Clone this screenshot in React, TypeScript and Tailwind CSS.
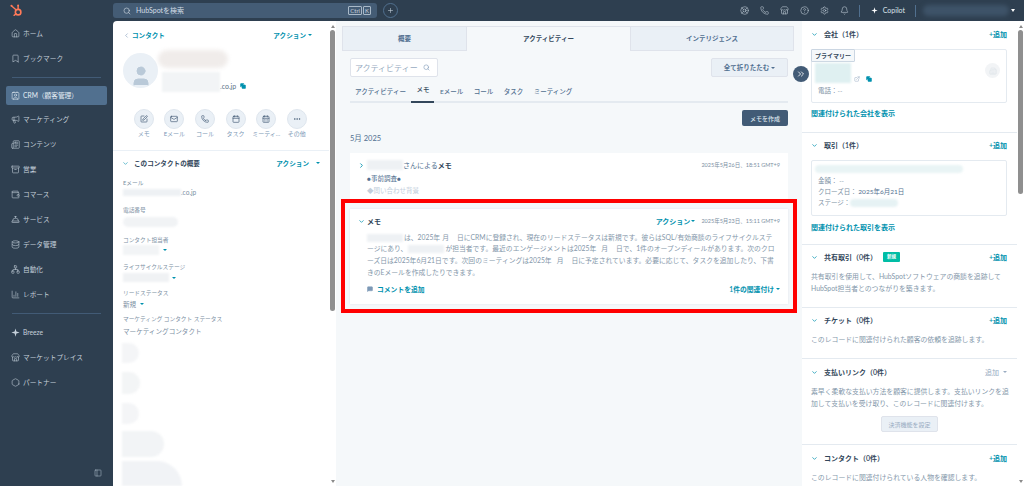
import { Archive, BarChart3, Bell, Bookmark, ChevronDown, ChevronLeft, ChevronRight, ChevronsRight, CircleHelp, ConciergeBell, Copy, Database, Ellipsis, ExternalLink, House, Mail, Megaphone, MessageSquare, Network, Newspaper, PanelLeft, Phone, Plus, Search, Settings, SquarePen, Store, Calendar, CalendarDays, Wallet, Contact, LifeBuoy, Hexagon, User, Building2 } from 'lucide-react';
import type { ReactNode } from 'react';

const navTop = [
  { label: 'マーケティング', icon: Megaphone },
  { label: 'コンテンツ', icon: Newspaper },
  { label: '営業', icon: Archive },
  { label: 'コマース', icon: Wallet },
  { label: 'サービス', icon: ConciergeBell },
  { label: 'データ管理', icon: Database },
  { label: '自動化', icon: Network },
  { label: 'レポート', icon: BarChart3 },
];

function Spark({ className }: { className?: string }) {
  return (
    <svg viewBox="0 0 12 12" className={className} fill="currentColor">
      <path d="M6 0.5 7.2 4.8 11.5 6 7.2 7.2 6 11.5 4.8 7.2 0.5 6 4.8 4.8Z" />
    </svg>
  );
}

function Logo() {
  return (
    <svg viewBox="0 0 16 16" className="h-[13px] w-[13px] text-[#ff7a59]" fill="none" stroke="currentColor">
      <circle cx="10" cy="10" r="3.4" strokeWidth="2" />
      <path d="M10 6.5V2.5M2 2.5l5.4 4.6M5 14l2.6-2" strokeWidth="1.7" strokeLinecap="round" />
      <circle cx="10" cy="1.8" r="1.2" fill="currentColor" stroke="none" />
      <circle cx="1.8" cy="2.2" r="1.3" fill="currentColor" stroke="none" />
    </svg>
  );
}

function NavItem({ label, icon: Icon }: { label: string; icon: typeof House }) {
  return (
    <div className="flex h-[25px] items-center gap-[3px] pl-[11px] text-[6.7px] text-[#c5d0db]">
      <Icon className="h-[9px] w-[9px] shrink-0" strokeWidth={1.5} />
      <span className="whitespace-nowrap">{label}</span>
    </div>
  );
}

function Sidebar() {
  return (
    <aside className="flex w-[113px] shrink-0 flex-col">
      <div className="flex h-[21px] items-center pl-[10px]"><Logo /></div>
      <NavItem label="ホーム" icon={House} />
      <NavItem label="ブックマーク" icon={Bookmark} />
      <div className="mx-[12px] mb-[8px] mt-[6px] h-px bg-[#425b76]" />
      <div className="mx-[6px] mb-[2px] flex h-[19px] items-center gap-[3px] rounded-[2px] bg-[#51708f] pl-[5px] text-[6.7px] text-[#e5edf4]">
        <Contact className="h-[9px] w-[9px]" strokeWidth={1.5} />
        <span>CRM（顧客管理）</span>
      </div>
      {navTop.map((n) => <NavItem key={n.label} label={n.label} icon={n.icon} />)}
      <div className="mx-[12px] mb-[6px] mt-[6px] h-px bg-[#425b76]" />
      <NavItem label="Breeze" icon={Spark as unknown as typeof House} />
      <NavItem label="マーケットプレイス" icon={Store} />
      <NavItem label="パートナー" icon={Hexagon} />
      <div className="mb-[9px] mr-[11px] mt-auto flex justify-end text-[#b6c4d2]">
        <PanelLeft className="h-[8px] w-[8px]" strokeWidth={1.5} />
      </div>
    </aside>
  );
}

function TopBar() {
  return (
    <header className="flex h-[21px] items-center text-[#c5d0db]">
      <div className="flex h-[15px] w-[264px] items-center rounded-[3px] bg-[#445c75] pl-[10px] pr-[4px] text-[7px]">
        <Search className="mr-[5px] h-[8px] w-[8px]" strokeWidth={2} />
        <span className="text-[#d3dde6]">HubSpotを検索</span>
        <span className="ml-auto flex gap-[1px] pr-[2px] text-[6px]">
          <span className="rounded-[1px] border border-[#a9b9c8] px-[1px] leading-[7px]">Ctrl</span>
          <span className="rounded-[1px] border border-[#a9b9c8] px-[1px] leading-[7px]">K</span>
        </span>
      </div>
      <div className="ml-[6px] flex h-[15px] w-[15px] items-center justify-center rounded-full border border-[#51708f]">
        <Plus className="h-[7px] w-[7px]" strokeWidth={2} />
      </div>
      <div className="ml-auto flex items-center gap-[11px]">
        <LifeBuoy className="h-[9px] w-[9px]" strokeWidth={1.5} />
        <Phone className="h-[9px] w-[9px]" strokeWidth={1.5} />
        <Store className="h-[9px] w-[9px]" strokeWidth={1.5} />
        <CircleHelp className="h-[9px] w-[9px]" strokeWidth={1.5} />
        <Settings className="h-[9px] w-[9px]" strokeWidth={1.5} />
        <Bell className="h-[9px] w-[9px]" strokeWidth={1.5} />
      </div>
      <div className="ml-[10px] h-[12px] w-px bg-[#51708f]" />
      <Spark className="ml-[11px] h-[7px] w-[7px] text-white" />
      <span className="ml-[5px] text-[7px] text-[#dbe3ea]">Copilot</span>
      <div className="ml-[10px] h-[12px] w-px bg-[#51708f]" />
      <div className="ml-[7px] h-[11px] w-[86px] rounded-full bg-[#3e5368] blur-[2px]" />
      <div className="ml-[2px] mr-[9px] h-0 w-0 border-x-[2.5px] border-t-[3px] border-x-transparent border-t-white" />
    </header>
  );
}

function Caret({ className = 'border-t-[#0091ae]' }: { className?: string }) {
  return <span className={`inline-block h-0 w-0 border-x-[2px] border-t-[2.5px] border-x-transparent ${className}`} />;
}

function ActionBtn({ label, icon }: { label: string; icon: ReactNode }) {
  return (
    <div className="flex w-[30.6px] flex-col items-center gap-[1px]">
      <div className="flex h-[20px] w-[20px] items-center justify-center rounded-full border border-[#dfe6ee] bg-[#eaf0f6] text-[#425b76]">{icon}</div>
      <span className="whitespace-nowrap text-[6px] leading-[8px] text-[#7c98b6]">{label}</span>
    </div>
  );
}

function Field({ label, children, className }: { label: string; children: ReactNode; className?: string }) {
  return (
    <div className={className}>
      <div className="text-[5.7px] leading-[9px] text-[#7c8fa3]">{label}</div>
      {children}
    </div>
  );
}

function LeftPanel() {
  const ic = 'h-[8px] w-[8px]';
  return (
    <section className="flex w-[223px] shrink-0 overflow-hidden rounded-tl-[4px] bg-white">
      <div className="w-[216px] shrink-0">
        <div className="flex items-center justify-between pl-[10px] pr-[17px] pt-[9px] text-[6.6px] font-semibold leading-[10px] text-[#0091ae]">
          <span className="flex items-center gap-[2px]"><ChevronLeft className="h-[7px] w-[7px] text-[#7c98b6]" />コンタクト</span>
          <span className="flex items-center gap-[2px]">アクション<Caret /></span>
        </div>
        <div className="flex pl-[10px] pt-[13px]">
          <div className="relative flex h-[35px] w-[35px] flex-col items-center overflow-hidden rounded-full bg-[#eaf0f6] pt-[11px]">
            <User className="h-[24px] w-[24px] fill-[#b9c9d8] text-[#b9c9d8]" strokeWidth={1} />
          </div>
          <div className="-mt-[3px]">
            <div className="h-[18px] w-[70px] rounded-full bg-[#f0ecea] blur-[2px]" />
            <div className="mt-[4px] flex items-end pl-[4px] text-[7px] text-[#5c7288]">
              <div className="h-[20px] w-[58px] bg-[#f2f4f6] blur-[1px]" />
              <span className="mb-[1px]">.co.jp</span>
              <Copy className="mb-[3px] ml-[4px] h-[6px] w-[6px] fill-[#0091ae] text-[#0091ae]" />
            </div>
          </div>
        </div>
        <div className="flex pl-[15.5px] pt-[17px]">
          <ActionBtn label="メモ" icon={<SquarePen className={ic} />} />
          <ActionBtn label="Eメール" icon={<Mail className={ic} />} />
          <ActionBtn label="コール" icon={<Phone className={ic} />} />
          <ActionBtn label="タスク" icon={<Calendar className={ic} />} />
          <ActionBtn label="ミーティ..." icon={<CalendarDays className={ic} />} />
          <ActionBtn label="その他" icon={<Ellipsis className={ic} />} />
        </div>
        <div className="mt-[12px] h-px bg-[#eaf0f6]" />
        <div className="flex items-center pl-[9px] pr-[9px] pt-[7px] text-[6.6px] font-semibold leading-[10px]">
          <ChevronDown className="h-[7px] w-[7px] text-[#0091ae]" />
          <span className="ml-[5px] text-[#33475b]">このコンタクトの概要</span>
          <span className="ml-auto flex items-center gap-[7px] text-[#0091ae]">アクション<Caret /></span>
        </div>
        <div className="pl-[10px] text-[6.6px] text-[#7c8fa3]">
          <Field label="Eメール" className="mt-[10px]">
            <div className="flex h-[10px] items-center leading-[10px]"><div className="h-[7px] w-[58px] bg-[#eef1f4] blur-[1px]" /><span>.co.jp</span></div>
          </Field>
          <Field label="電話番号" className="mt-[8px]">
            <div className="mt-[3px] h-[10px] w-[55px] rounded-full bg-[#f1f3f5] blur-[1px]" />
          </Field>
          <Field label="コンタクト担当者" className="mt-[8px]">
            <div className="mt-[1px] flex items-center gap-[4px]"><div className="h-[10px] w-[36px] bg-[#f2f4f6] blur-[1px]" /><Caret /></div>
          </Field>
          <Field label="ライフサイクルステージ" className="mt-[7px]">
            <div className="mt-[2px] flex items-center gap-[3px]"><div className="h-[9px] w-[46px] bg-[#f0f2f4] blur-[1px]" /><Caret /></div>
          </Field>
          <Field label="リードステータス" className="mt-[6px]">
            <div className="mt-[2px] flex h-[10px] items-center gap-[4px] leading-[10px]">新規<Caret /></div>
          </Field>
          <Field label="マーケティング コンタクト ステータス" className="mt-[5px]">
            <div className="mt-[3px] leading-[11px]">マーケティングコンタクト</div>
          </Field>
        </div>
        <div className="flex flex-col pl-[9px] pt-[6px]">
          <div className="h-[20px] w-[17px] rounded-r-full bg-[#f4f5f7] blur-[1px]" />
          <div className="mt-[9px] h-[22px] w-[18px] rounded-r-full bg-[#f3f5f6] blur-[1px]" />
          <div className="mt-[9px] h-[21px] w-[17px] rounded-r-full bg-[#f4f5f7] blur-[1px]" />
          <div className="mt-[7px] h-[26px] w-[42px] rounded-r-full bg-[#f2f4f6] blur-[1px]" />
          <div className="mt-[4px] h-[25px] w-[60px] rounded-tr-full bg-[#f1f3f6] blur-[1px]" />
        </div>
      </div>
      <Scrollbar thumb="h-[281px]" />
    </section>
  );
}

function Scrollbar({ thumb }: { thumb: string }) {
  return (
    <div className="flex w-[7px] shrink-0 flex-col items-center bg-white pt-[4px]">
      <div className="h-0 w-0 border-x-[2.5px] border-b-[3px] border-x-transparent border-b-[#8a8a8a]" />
      <div className={`mt-[2px] w-[5px] rounded-full bg-[#8f8f8f] ${thumb}`} />
      <div className="mb-[3px] mt-auto h-0 w-0 border-x-[2.5px] border-t-[3px] border-x-transparent border-t-[#8a8a8a]" />
    </div>
  );
}

function CenterPanel() {
  const subTabs = ['アクティビティー', 'メモ', 'Eメール', 'コール', 'タスク', 'ミーティング'];
  return (
    <section className="w-[466px] shrink-0 overflow-hidden bg-[#f5f8fa] pt-[5px] text-[#33475b]">
      <div className="ml-[6px] mr-[8px] flex h-[25px] text-[6.5px] font-semibold text-[#516f90]">
        <div className="flex w-[125px] items-center justify-center border border-[#dfe3eb] bg-[#eaf0f6]">概要</div>
        <div className="flex w-[163px] items-center justify-center border-t border-[#dfe3eb] bg-[#f5f8fa] text-[#33475b]">アクティビティー</div>
        <div className="flex flex-1 items-center justify-center border border-[#dfe3eb] bg-[#eaf0f6]">インテリジェンス</div>
      </div>
      <div className="mx-[14px]">
        <div className="mt-[7px] flex items-center justify-between">
          <div className="flex h-[19px] w-[88px] items-center justify-between overflow-hidden rounded-[2px] border border-[#dfe3eb] bg-white pl-[4px] pr-[7px] text-[8px] text-[#99acc2]">
            <span className="w-[64px] overflow-hidden whitespace-nowrap">アクティビティー</span>
            <Search className="h-[7px] w-[7px] text-[#7c98b6]" />
          </div>
          <div className="flex h-[19px] w-[77px] items-center justify-center gap-[2px] rounded-[2px] border border-[#dfe3eb] bg-[#eaf0f6] text-[6.5px] font-semibold text-[#516f90]">
            全て折りたたむ<Caret className="border-t-[#516f90]" />
          </div>
        </div>
        <div className="flex h-[26px] items-end gap-[10.5px] border-b-[2px] border-[#e4eaf0] pl-[5px] text-[6.5px] font-medium text-[#516f90]">
          {subTabs.map((t) => (
            <span key={t} className={t === 'メモ' ? 'relative -mx-[5px] -mb-[2px] border-b-[2px] border-[#33475b] px-[5px] pb-[7px] leading-[9px] text-[#33475b]' : 'pb-[5px] leading-[9px]'}>{t}</span>
          ))}
        </div>
        <div className="mt-[7px] flex justify-end">
          <div className="flex h-[16px] w-[46px] items-center justify-center rounded-[2px] bg-[#425b76] text-[6px] font-medium text-[#dfe6ee]">メモを作成</div>
        </div>
        <div className="mt-[8px] text-[7.5px] leading-[10px] text-[#516f90]">5月 2025</div>

        <div className="mt-[9px] h-[48px] bg-white px-[8px] pt-[7px]">
          <div className="flex items-center text-[7px] leading-[10px]">
            <ChevronRight className="h-[7px] w-[7px] text-[#0091ae]" strokeWidth={3} />
            <div className="ml-[2px] h-[10px] w-[36px] bg-[#eef1f4] blur-[1px]" />
            <span className="text-[#516f90]">さんによる</span><span className="font-semibold">メモ</span>
            <span className="ml-auto text-[5.5px] text-[#7c8fa3]">2025年5月26日、18:51 GMT+9</span>
          </div>
          <div className="mt-[4px] pl-[9px] text-[6.5px] leading-[9px] text-[#516f90]">●事前調査●</div>
          <div className="mt-[3px] pl-[9px] text-[6.5px] leading-[9px] text-[#c2cedb]">◆問い合わせ背景</div>
        </div>

        <div className="mt-[8px] h-[95px] bg-white px-[8px] pt-[7px] shadow-[0_0_2px_#dfe3eb]">
          <div className="flex items-center text-[7px] leading-[10px]">
            <ChevronDown className="h-[7px] w-[7px] text-[#0091ae]" strokeWidth={2.5} />
            <span className="ml-[2px] font-semibold">メモ</span>
            <span className="ml-auto flex items-center gap-[1px] font-semibold text-[#0091ae]">アクション<Caret /></span>
            <span className="ml-[6px] text-[5.5px] text-[#7c8fa3]">2025年5月23日、15:11 GMT+9</span>
          </div>
          <p className="mt-[5.5px] whitespace-nowrap pl-[9px] text-[6.8px] leading-[11.7px] text-[#8497aa]">
            <span className="mr-px inline-block h-[8px] w-[36px] bg-[#eef1f4] align-middle blur-[1px]" />は、2025年<span className="inline-block w-[2px]" />月<span className="inline-block w-[8px]" />日にCRMに登録され、現在のリードステータスは新規です。彼らはSQL/有効商談のライフサイクルステ<br />
            ージにあり、<span className="mx-px inline-block h-[8px] w-[36px] bg-[#eef1f4] align-middle blur-[1px]" />が担当者です。最近のエンゲージメントは2025年<span className="inline-block w-[5px]" />月<span className="inline-block w-[8px]" />日で、1件のオープンディールがあります。次のクロ<br />
            ーズ日は2025年6月21日です。次回のミーティングは2025年<span className="inline-block w-[5px]" />月<span className="inline-block w-[8px]" />日に予定されています。必要に応じて、タスクを追加したり、下書<br />
            きのEメールを作成したりできます。
          </p>
          <div className="mt-[5.5px] flex items-center pl-[9px] text-[6.8px] font-semibold leading-[10px] text-[#0091ae]">
            <MessageSquare className="mr-[4px] h-[6px] w-[6px] fill-[#7c98b6] text-[#7c98b6]" />
            コメントを追加
            <span className="ml-auto flex items-center gap-[2px]">1件の関連付け<Caret /></span>
          </div>
        </div>
      </div>
    </section>
  );
}

function SideHeader({ title, add = '+追加', muted, badge }: { title: string; add?: string; muted?: boolean; badge?: boolean }) {
  return (
    <div className="flex items-center pr-px text-[7px] leading-[10px]">
      <ChevronDown className="h-[7px] w-[7px] text-[#0091ae]" strokeWidth={2.5} />
      <span className="ml-[6px] font-semibold text-[#33475b]">{title}</span>
      {badge && <span className="ml-[6px] flex h-[10px] w-[17px] items-center justify-center rounded-[1px] bg-[#00bda5] text-[4.5px] font-semibold text-white">新規</span>}
      <span className={muted ? 'ml-auto flex items-center gap-[4px] text-[#99acc2]' : 'ml-auto font-semibold text-[#0091ae]'}>{add}{muted && <Caret className="border-t-[#99acc2]" />}</span>
    </div>
  );
}

function Desc({ children }: { children: ReactNode }) {
  return <p className="whitespace-nowrap text-[6.85px] leading-[11.7px] text-[#8497aa]">{children}</p>;
}

function RightPanel() {
  return (
    <section className="flex min-w-0 flex-1 overflow-hidden bg-white">
      <div className="w-[215px] shrink-0">
        <div className="h-[111px] px-[9px] pt-[8px]">
          <SideHeader title="会社（1件）" />
          <div className="relative mr-px mt-[10px] h-[54px] rounded-[2px] border border-[#e4eaf0] pl-[3px] pt-[13px]">
            <span className="absolute -left-px -top-px flex h-[13px] w-[44px] items-center justify-center rounded-[1px] border border-[#cbd6e2] bg-[#f5f8fa] text-[6px] font-semibold text-[#33475b]">プライマリー</span>
            <div className="flex items-end">
              <div className="h-[20px] w-[36px] bg-[#dff0f1] blur-[1px]" />
              <ExternalLink className="mb-[1px] ml-[3px] h-[6px] w-[6px] text-[#99acc2]" />
              <Copy className="mb-[1px] ml-[6px] h-[6px] w-[6px] fill-[#0091ae] text-[#0091ae]" />
              <div className="mb-[5px] ml-auto mr-[6px] flex h-[15px] w-[15px] items-center justify-center rounded-full bg-[#f2f4f6]">
                <Building2 className="h-[8px] w-[8px] text-[#e0e5ea]" />
              </div>
            </div>
            <div className="mt-[3px] pl-[3px] text-[6.5px] leading-[10px] text-[#7c8fa3]">電話：--</div>
          </div>
          <div className="mt-[5px] text-[7px] font-semibold leading-[10px] text-[#0091ae]">関連付けられた会社を表示</div>
        </div>
        <div className="h-[112px] border-t border-[#e4eaf0] px-[9px] pt-[7px]">
          <SideHeader title="取引（1件）" />
          <div className="mr-px mt-[10px] h-[56px] rounded-[2px] border border-[#e4eaf0] pl-[3px] pt-[4px] text-[6.5px] leading-[11px] text-[#7c8fa3]">
            <div className="mb-[2px] h-[8px] w-[148px] rounded-full bg-[#e9f4f5] blur-[1px]" />
            <div className="pl-[3px]">金額： --</div>
            <div className="pl-[3px]">クローズ日： <span className="text-[#516f90]">2025年6月21日</span></div>
            <div className="flex items-center pl-[3px]">ステージ：<div className="h-[8px] w-[48px] rounded-full bg-[#e6f2f4] blur-[1px]" /></div>
          </div>
          <div className="mt-[6px] text-[7px] font-semibold leading-[10px] text-[#0091ae]">関連付けられた取引を表示</div>
        </div>
        <div className="h-[63px] border-t border-[#e4eaf0] px-[9px] pt-[7px]">
          <SideHeader title="共有取引（0件）" badge />
          <div className="mt-[9px]"><Desc>共有取引を使用して、HubSpotソフトウェアの商談を追跡して<br />HubSpot担当者とのつながりを築きます。</Desc></div>
        </div>
        <div className="h-[51px] border-t border-[#e4eaf0] px-[9px] pt-[7px]">
          <SideHeader title="チケット（0件）" />
          <div className="mt-[9px]"><Desc>このレコードに関連付けられた顧客の依頼を追跡します。</Desc></div>
        </div>
        <div className="h-[86px] border-t border-[#e4eaf0] px-[9px] pt-[8px]">
          <SideHeader title="支払いリンク（0件）" add="追加" muted />
          <div className="mt-[9px]"><Desc>素早く柔軟な支払い方法を顧客に提供します。支払いリンクを追<br />加して支払いを受け取り、このレコードに関連付けます。</Desc></div>
          <div className="mt-[7px] flex justify-center">
            <div className="flex h-[16px] w-[57px] items-center justify-center rounded-[2px] border border-[#dfe3eb] bg-[#eaf0f6] text-[6px] text-[#99acc2]">決済機能を設定</div>
          </div>
        </div>
        <div className="border-t border-[#e4eaf0] px-[9px] pt-[8px]">
          <SideHeader title="コンタクト（0件）" />
          <div className="mt-[9px]"><Desc>このレコードに関連付けられている人物を確認します。</Desc></div>
        </div>
      </div>
      <Scrollbar thumb="h-[164px]" />
    </section>
  );
}

export default function App() {
  return (
    <div className="relative flex h-[486px] w-[1024px] overflow-hidden bg-[#2e3f50] font-['Lato','Noto_Sans_CJK_JP',sans-serif]">
      <Sidebar />
      <div className="flex min-w-0 flex-1 flex-col">
        <TopBar />
        <div className="flex min-h-0 flex-1">
          <LeftPanel />
          <CenterPanel />
          <RightPanel />
        </div>
      </div>
      <div className="absolute left-[793px] top-[66px] flex h-[16px] w-[16px] items-center justify-center rounded-full bg-[#425b76] text-white">
        <ChevronsRight className="h-[10px] w-[10px]" />
      </div>
      <div className="absolute left-[341px] top-[199px] h-[114px] w-[456px] border-[4px] border-[#ff0000]" />
    </div>
  );
}
